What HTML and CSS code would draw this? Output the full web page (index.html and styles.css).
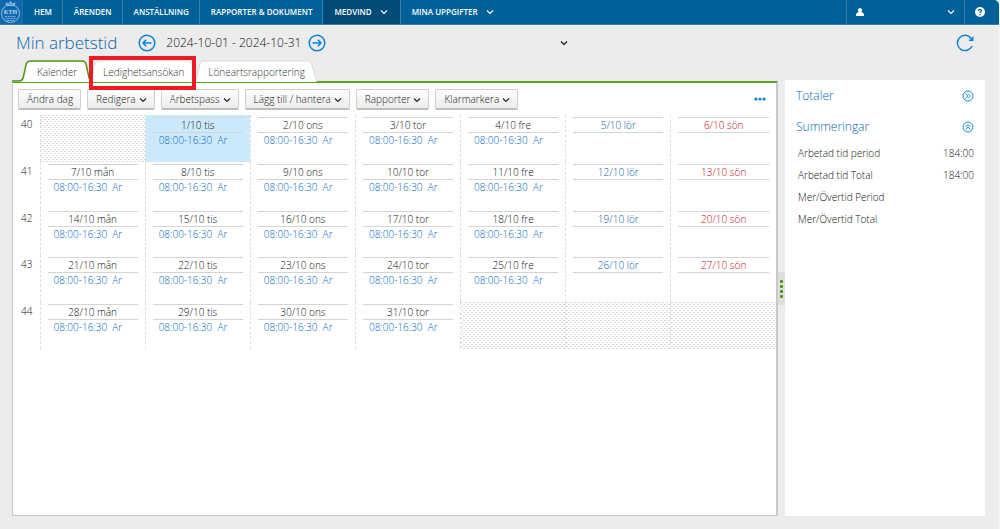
FILE: index.html
```html
<!DOCTYPE html>
<html lang="sv">
<head>
<meta charset="utf-8">
<title>Min arbetstid</title>
<link rel="stylesheet" href="styles.css">
</head>
<body>
<svg class="defs" width="0" height="0" aria-hidden="true">
  <symbol id="chev" viewBox="0 0 8 8"><path d="M1 2.500 4 5.500 7 2.500" fill="none" stroke="currentColor" stroke-width="1.100"/></symbol>
  <symbol id="arrow" viewBox="0 0 18 18"><g fill="none" stroke="currentColor" stroke-width="1.500"><circle cx="9" cy="9" r="7.800"/><path d="M4.500 9H13M9.800 5.800 13 9 9.800 12.200"/></g></symbol>
  <symbol id="double" viewBox="0 0 12 12"><g fill="none" stroke="currentColor"><circle cx="6" cy="6" r="5"/><path d="M3.500 3.500 6 6 3.500 8.500M6 3.500 8.500 6 6 8.500"/></g></symbol>
</svg>
<div class="app">
  <nav class="nav">
    <a class="logo" href="#" aria-label="KTH">
      <svg viewBox="0 0 22 24" width="22" height="24"><g fill="none" stroke="#8fbfe3"><circle cx="10.500" cy="13.500" r="9"/><path d="M5 16.500h11M5.500 18.500h10M7 20.500h7" stroke-dasharray="2 .7" stroke-width=".9"/><path d="M7 5.500 6 3l2.500 1L10.500 1.500 12.500 4 15 3 14 5.500Z" fill="#5b9fd3"/></g><text x="10.500" y="14" class="logo-text">KTH</text></svg>
    </a>
    <a class="nav-item" href="#">HEM</a>
    <a class="nav-item" href="#">ÄRENDEN</a>
    <a class="nav-item" href="#">ANSTÄLLNING</a>
    <a class="nav-item" href="#">RAPPORTER &amp; DOKUMENT</a>
    <a class="nav-item active" href="#">MEDVIND<svg class="chev"><use href="#chev"/></svg></a>
    <a class="nav-item last" href="#">MINA UPPGIFTER<svg class="chev"><use href="#chev"/></svg></a>
    <button class="user" aria-label="Användare"><svg width="8" height="8" viewBox="0 0 8 8"><path d="M4 0a2 2.200 0 0 1 1.200 4C7 4.500 8 5 8 8H0C0 5 1 4.500 2.800 4A2 2.200 0 0 1 4 0Z" fill="#fff"/></svg><svg class="chev"><use href="#chev"/></svg></button>
    <button class="help" aria-label="Hjälp"><svg width="10" height="10" viewBox="0 0 10 10"><circle cx="5" cy="5" r="5" fill="#fff"/><path d="M3.400 4C3.400 1.700 6.600 1.900 6.500 3.800 6.400 4.700 5 4.700 5 6M5 6.900v1.300" fill="none" stroke="#006098" stroke-width="1.300"/></svg></button>
  </nav>

  <header class="head">
    <h1>Min arbetstid</h1>
    <button class="round back" aria-label="Föregående period"><svg><use href="#arrow"/></svg></button>
    <span class="period">2024-10-01 - 2024-10-31</span>
    <button class="round" aria-label="Nästa period"><svg><use href="#arrow"/></svg></button>
    <button class="picker" aria-label="Välj"><svg class="chev"><use href="#chev"/></svg></button>
    <button class="round reload" aria-label="Uppdatera"><svg viewBox="0 0 18 18"><path d="M15.200 4.500A7.600 7.600 0 1 0 16 12" fill="none" stroke="currentColor" stroke-width="1.500"/><path d="M17.500 2v5h-5Z" fill="currentColor"/></svg></button>
  </header>

  <main class="body">
    <section class="left">
      <div class="tabs" role="tablist">
        <button class="tab on" role="tab" aria-selected="true"><svg viewBox="0 0 78 22" preserveAspectRatio="none"><path d="M0 21H7Q10 21 11 18L14 4Q15 1 18 1H70Q72 1 73 4L76 18Q77 21 78 21V22H0Z" fill="#fff"/><path d="M0 21H7Q10 21 11 18L14 4Q15 1 18 1H70Q72 1 73 4L76 18Q77 21 78 21" fill="none" stroke="#4a970d" stroke-width="1.500"/></svg><span>Kalender</span></button>
        <button class="tab marked" role="tab"><svg viewBox="0 0 106 22" preserveAspectRatio="none"><path d="M0 22 4 4Q5 1 8 1H98Q101 1 102 4L106 22" fill="#fff" stroke="#d5dee2"/></svg><span>Ledighetsansökan</span></button>
        <button class="tab" role="tab"><svg viewBox="0 0 122 22" preserveAspectRatio="none"><path d="M0 22 4 4Q5 1 8 1H113Q116 1 117 4L122 22" fill="#fff" stroke="#d5dee2"/></svg><span>Löneartsrapportering</span></button>
      </div>
      <div class="panel">
        <div class="tools">
          <button class="btn">Ändra dag</button>
          <button class="btn drop">Redigera<svg class="chev"><use href="#chev"/></svg></button>
          <button class="btn drop">Arbetspass<svg class="chev"><use href="#chev"/></svg></button>
          <button class="btn drop">Lägg till / hantera<svg class="chev"><use href="#chev"/></svg></button>
          <button class="btn drop">Rapporter<svg class="chev"><use href="#chev"/></svg></button>
          <button class="btn drop">Klarmarkera<svg class="chev"><use href="#chev"/></svg></button>
          <button class="more" aria-label="Mer"><svg width="12" height="4" viewBox="0 0 12 4"><g fill="#0a83d6"><circle cx="2" cy="2" r="1.600"/><circle cx="6" cy="2" r="1.600"/><circle cx="10" cy="2" r="1.600"/></g></svg></button>
        </div>
        <table class="cal">
          <tbody>
          <tr><th scope="row">40</th><td class="out"></td><td class="sel"><div class="date">1/10 tis</div><a href="#">08:00-16:30&nbsp; Ar</a></td><td><div class="date">2/10 ons</div><a href="#">08:00-16:30&nbsp; Ar</a></td><td><div class="date">3/10 tor</div><a href="#">08:00-16:30&nbsp; Ar</a></td><td><div class="date">4/10 fre</div><a href="#">08:00-16:30&nbsp; Ar</a></td><td><div class="date sat">5/10 lör</div></td><td><div class="date sun">6/10 sön</div></td></tr>
          <tr><th scope="row">41</th><td><div class="date">7/10 mån</div><a href="#">08:00-16:30&nbsp; Ar</a></td><td><div class="date">8/10 tis</div><a href="#">08:00-16:30&nbsp; Ar</a></td><td><div class="date">9/10 ons</div><a href="#">08:00-16:30&nbsp; Ar</a></td><td><div class="date">10/10 tor</div><a href="#">08:00-16:30&nbsp; Ar</a></td><td><div class="date">11/10 fre</div><a href="#">08:00-16:30&nbsp; Ar</a></td><td><div class="date sat">12/10 lör</div></td><td><div class="date sun">13/10 sön</div></td></tr>
          <tr><th scope="row">42</th><td><div class="date">14/10 mån</div><a href="#">08:00-16:30&nbsp; Ar</a></td><td><div class="date">15/10 tis</div><a href="#">08:00-16:30&nbsp; Ar</a></td><td><div class="date">16/10 ons</div><a href="#">08:00-16:30&nbsp; Ar</a></td><td><div class="date">17/10 tor</div><a href="#">08:00-16:30&nbsp; Ar</a></td><td><div class="date">18/10 fre</div><a href="#">08:00-16:30&nbsp; Ar</a></td><td><div class="date sat">19/10 lör</div></td><td><div class="date sun">20/10 sön</div></td></tr>
          <tr><th scope="row">43</th><td><div class="date">21/10 mån</div><a href="#">08:00-16:30&nbsp; Ar</a></td><td><div class="date">22/10 tis</div><a href="#">08:00-16:30&nbsp; Ar</a></td><td><div class="date">23/10 ons</div><a href="#">08:00-16:30&nbsp; Ar</a></td><td><div class="date">24/10 tor</div><a href="#">08:00-16:30&nbsp; Ar</a></td><td><div class="date">25/10 fre</div><a href="#">08:00-16:30&nbsp; Ar</a></td><td><div class="date sat">26/10 lör</div></td><td><div class="date sun">27/10 sön</div></td></tr>
          <tr><th scope="row">44</th><td><div class="date">28/10 mån</div><a href="#">08:00-16:30&nbsp; Ar</a></td><td><div class="date">29/10 tis</div><a href="#">08:00-16:30&nbsp; Ar</a></td><td><div class="date">30/10 ons</div><a href="#">08:00-16:30&nbsp; Ar</a></td><td><div class="date">31/10 tor</div><a href="#">08:00-16:30&nbsp; Ar</a></td><td class="out"></td><td class="out"></td><td class="out"></td></tr>
          </tbody>
        </table>
      </div>
    </section>
    <div class="split"><div class="grip"><i></i><i></i><i></i><i></i></div></div>
    <aside class="side">
      <h2>Totaler<button class="fold" aria-label="Visa totaler"><svg><use href="#double"/></svg></button></h2>
      <h2>Summeringar<button class="fold up" aria-label="Dölj summeringar"><svg><use href="#double"/></svg></button></h2>
      <dl>
        <div><dt>Arbetad tid period</dt><dd>184:00</dd></div>
        <div><dt>Arbetad tid Total</dt><dd>184:00</dd></div>
        <div><dt>Mer/Övertid Period</dt><dd></dd></div>
        <div><dt>Mer/Övertid Total</dt><dd></dd></div>
      </dl>
    </aside>
  </main>
</div>
</body>
</html>
```

FILE: styles.css
```css
* { box-sizing: border-box; }
html { background: #f4f4f4; }
body { margin: 0; font: 300 10px/14px "Open Sans", "Noto Sans", sans-serif; color: #111; }
button { font: inherit; color: inherit; background: none; border: 0; padding: 0; cursor: pointer; }
a { color: inherit; text-decoration: none; }
.defs { position: absolute; }
.chev { width: 8px; height: 8px; flex: none; }

.app { display: flex; flex-direction: column; min-height: 100vh; margin-right: 1px; background: #ececec; border-top-right-radius: 5px; }

.nav { display: flex; height: 25px; background: #006098; color: #fff; font-weight: 600; font-size: 8px; border-bottom: 1px solid #2f7fb2; border-top-right-radius: 5px; box-shadow: 0 1px 0 #fff; }
.logo { width: 23px; background: #1268ae; border-right: 1px solid #1b70a4; }
.logo-text { font: 700 6px "Liberation Serif", serif; fill: #b9d8ef; text-anchor: middle; }
.nav-item { display: flex; align-items: center; gap: 8px; padding: 0 10px 0 11px; border-right: 1px solid #3580ae; }
.nav-item.active { background: #004b77; padding-right: 12px; }
.nav-item.last { border-right: 0; }
.user { display: flex; align-items: center; justify-content: space-between; width: 119px; margin-left: auto; padding: 0 9px; border: solid #3580ae; border-width: 0 1px; }
.help { width: 34px; padding-right: 4px; display: grid; place-items: center; }

.head { display: flex; align-items: center; height: 36px; padding: 0 25px 0 16px; }
.head h1 { margin: 0 21px 0 0; font-weight: 300; font-size: 17px; line-height: 24px; color: #0a66ae; }
.round { width: 18px; height: 18px; color: #0a83d6; }
.round svg { display: block; width: 18px; height: 18px; }
.back svg { transform: scaleX(-1); }
.period { margin: 0 7px 0 10px; font-size: 12px; line-height: 18px; }
.picker { margin-left: 234px; display: flex; }
.reload { margin-left: auto; }

.body { display: flex; flex: 1; padding: 0 14px 13px 12px; }
.left { flex: 1; display: flex; flex-direction: column; }
.tabs { display: flex; height: 22px; margin-top: -1px; }
.tab { position: relative; height: 22px; padding: 2px 12px 0; }
.tab svg { position: absolute; inset: 0; width: 100%; height: 100%; }
.tab span { position: relative; color: #333; }
.tab.on { z-index: 1; padding-left: 25px; padding-right: 14px; }
.marked::after { content: ""; position: absolute; inset: -4px 0 -8px -2px; border: 4px solid #ed1c24; z-index: 2; }
.panel { flex: 1; margin-top: -1px; background: #fff; border: 1px solid #c8c8c8; border-top: 2px solid #5aa222; border-right-width: 2px; }

.tools { display: flex; gap: 6px; padding: 6px 10px 5px 5px; }
.btn { display: flex; align-items: center; gap: 3px; height: 21px; padding: 0 7px 0 8px; border: 1px solid #cfcfcf; border-bottom: 2px solid #bdbdbd; border-radius: 2px; background: linear-gradient(#fefefe, #ececec); color: #222; }
.drop .chev { margin-top: 2px; }
.more { margin: 0 0 6px auto; }

.cal { width: 100%; height: 234px; border-collapse: collapse; table-layout: fixed; }
.cal th { width: 27px; padding: 2px 0 0 8px; font-weight: 300; text-align: left; vertical-align: top; }
.cal td { padding: 2px 7px 0; border-left: 1px dashed #dedede; vertical-align: top; line-height: 14px; }
.cal a { display: block; padding-left: 6px; color: #0068c4; }
.date { height: 16px; border: 1px solid #d4d4d4; border-width: 1px 0; text-align: center; }
.cal .sat { color: #0a5fa5; }
.cal .sun { color: #c00d16; }
.cal .sel { background: #cce9fc; }
.cal .out { background: conic-gradient(from 270deg at 1px 1px, #b0b0b0 25%, transparent 0) 0 0 / 4px 4px, conic-gradient(from 270deg at 1px 1px, #b0b0b0 25%, transparent 0) 2px 2px / 4px 4px; }

.split { width: 7px; display: flex; align-items: center; }
.grip { display: flex; flex-direction: column; align-items: center; justify-content: center; gap: 2px; width: 7px; height: 33px; background: #dedede; }
.grip i { width: 3px; height: 3px; border-radius: 1px; background: #4a970d; }

.side { width: 200px; margin-top: 19px; padding: 0 11px; background: #fff; }
.side h2 { display: flex; align-items: center; justify-content: space-between; margin: 0; height: 31px; font-weight: 300; font-size: 12px; line-height: 16px; color: #0a66ae; }
.fold { width: 12px; height: 12px; color: #1e90dc; }
.fold svg { display: block; width: 12px; height: 12px; }
.up svg { transform: rotate(-90deg); }
.side dl { margin: 0 0 0 2px; }
.side dl div { display: flex; justify-content: space-between; align-items: center; height: 22px; }
.side dd { margin: 0; }
```
